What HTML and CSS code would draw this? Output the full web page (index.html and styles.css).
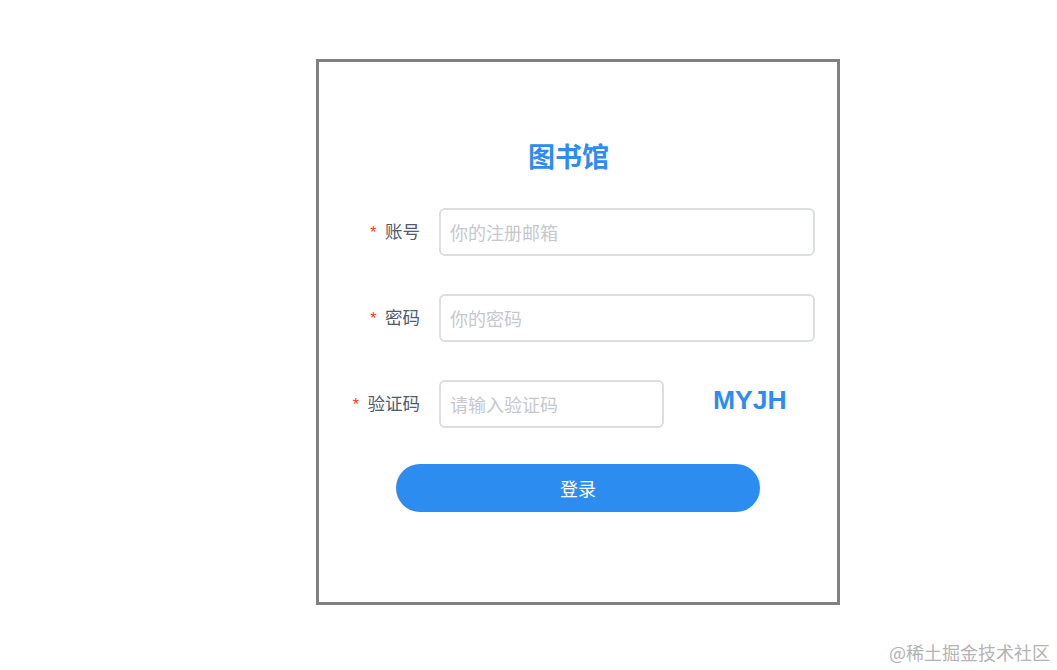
FILE: index.html
```html
<!DOCTYPE html>
<html lang="zh-CN">
<head>
  <meta charset="utf-8">
  <title>图书馆</title>
  <link rel="stylesheet" href="styles.css">
</head>
<body>
  <div class="login-box">
    <h2 class="title">图书馆</h2>
    <form class="login-form">
      <div class="form-item">
        <label class="form-label required">账号</label>
        <input type="text" class="form-input" placeholder="你的注册邮箱">
      </div>
      <div class="form-item">
        <label class="form-label required">密码</label>
        <input type="password" class="form-input" placeholder="你的密码">
      </div>
      <div class="form-item">
        <label class="form-label required">验证码</label>
        <input type="text" class="form-input code-input" placeholder="请输入验证码">
        <span class="code">MYJH</span>
      </div>
      <button type="button" class="login-btn">登录</button>
    </form>
  </div>
  <div class="watermark">@稀土掘金技术社区</div>
</body>
</html>
```

FILE: styles.css
```css
body {
  margin: 0;
  font-family: "Liberation Sans", "Noto Sans CJK SC", sans-serif;
  background-color: #ffffff;
  height: 670px;
  overflow: hidden;
}
.login-box {
  box-sizing: border-box;
  width: 524px;
  height: 546px;
  margin: 59px 0 0 316px;
  padding-top: 80px;
  border: solid 3px #808080;
}
.title {
  margin: 0 0 0 209px;
  font-size: 27px;
  line-height: 28px;
  font-weight: bold;
  color: #2d8cf0;
  font-family: "Noto Sans CJK SC", sans-serif;
}
.login-form {
  display: flex;
  flex-direction: column;
  margin-top: 38px;
}
.form-item {
  display: flex;
  align-items: center;
  height: 48px;
  margin-bottom: 38px;
}
.form-item:last-of-type {
  margin-bottom: 36px;
}
.form-label {
  box-sizing: border-box;
  width: 120px;
  padding-right: 19px;
  margin-top: -4px;
  text-align: right;
  font-size: 17.5px;
  color: #515a6e;
  font-family: "Noto Sans CJK SC", sans-serif;
}
.required::before {
  content: "*";
  margin-right: 7px;
  color: #ed4014;
  font-family: "Liberation Mono", monospace;
  font-size: 16px;
}
.form-input {
  box-sizing: border-box;
  width: 376px;
  height: 48px;
  padding: 0 9px;
  border: solid 2px #dcdee2;
  border-radius: 6px;
  font-size: 18px;
  font-family: "Noto Sans CJK SC", sans-serif;
  color: #515a6e;
  outline: none;
}
.form-input::placeholder {
  color: #c5c8ce;
}
.code-input {
  width: 225px;
}
.code {
  margin-left: 49px;
  font-family: "Liberation Sans", sans-serif;
  font-size: 26.5px;
  font-weight: bold;
  color: #2d8cf0;
  margin-top: -8px;
}
.login-btn {
  width: 364px;
  height: 48px;
  margin-left: 77px;
  border: none;
  border-radius: 24px;
  background-color: #2d8cf0;
  color: #ffffff;
  font-size: 18px;
  font-family: "Noto Sans CJK SC", sans-serif;
}
.watermark {
  position: absolute;
  right: 7px;
  bottom: 5px;
  font-size: 18px;
  color: #b3b3b3;
  font-family: "Noto Sans CJK SC", sans-serif;
}
```
